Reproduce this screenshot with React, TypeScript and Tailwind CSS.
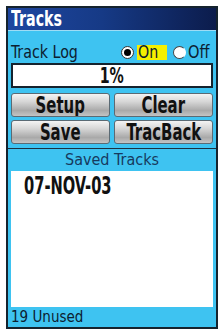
import React from "react";

const cond = { fontFamily: '"DejaVu Sans Condensed", "Liberation Sans Narrow", "DejaVu Sans", sans-serif' } as React.CSSProperties;

function Btn({ label }: { label: string }) {
  return (
    <div className="flex h-[24px] items-center justify-center overflow-hidden rounded-[3px] border border-[#5a6a74] bg-[linear-gradient(to_bottom,#f4f4f4_0%,#d6d6d6_35%,#a9a9a9_75%,#c4c4c4_100%)] text-[23px] font-bold leading-none text-[#111]" style={cond}>
      <span className="inline-block scale-x-[0.72]">{label}</span>
    </div>
  );
}

export default function App() {
  return (
    <div className="h-[329px] w-[221px] bg-white pl-[6px] pt-[6px]">
      <div className="flex h-[323px] w-[212px] flex-col border-2 border-[#15232e] bg-[#3ec3f1]">
        <div className="flex h-[22px] items-center bg-[linear-gradient(to_right,#1e46a0_0%,#163a86_45%,#0c1c4c_100%)] pl-[3px] text-[22px] font-bold leading-[22px] text-white" style={cond}>
          <span className="inline-block origin-left scale-x-[0.72]">Tracks</span>
        </div>
        <div className="h-[1px] bg-[#9fdcf5]" />
        <div className="flex flex-col px-[3px]">
          <div className="mt-[12px] flex h-[18px] items-center text-[17px] leading-none text-[#0c2030]" style={cond}>
            <span className="inline-block origin-left scale-x-[0.93]">Track Log</span>
            <div className="ml-auto flex items-center">
              <div className="flex h-[13px] w-[13px] items-center justify-center rounded-full border border-[#333] bg-white">
                <div className="h-[7px] w-[7px] rounded-full bg-black" />
              </div>
              <span className="ml-[3px] flex h-[15px] w-[30px] items-center bg-[#f5f000] pl-[1px]">
                <span className="inline-block origin-left scale-x-[0.93]">On</span>
              </span>
              <div className="ml-[6px] h-[13px] w-[13px] rounded-full border border-[#444] border-r-white bg-white" />
              <span className="ml-[2px] mr-[1px] inline-block w-[24px]">
                <span className="inline-block origin-left scale-x-[0.95]">Off</span>
              </span>
            </div>
          </div>
          <div className="mt-[2px] flex h-[25px] items-center justify-center border-2 border-[#15232e] bg-white text-[22px] font-bold leading-none text-[#111]" style={cond}>
            <span className="inline-block scale-x-[0.72]">1%</span>
          </div>
          <div className="mt-[5px] grid grid-cols-2 gap-x-[4px] gap-y-[3px]">
            <Btn label="Setup" />
            <Btn label="Clear" />
            <Btn label="Save" />
            <Btn label="TracBack" />
          </div>
        </div>
        <div className="mt-[4px] h-[1px] bg-[#1d3040]" />
        <div className="flex h-[22px] items-center justify-center text-[16px] leading-none text-[#163a5e]" style={cond}>
          Saved Tracks
        </div>
        <div className="mx-[3px] flex-1 bg-white pl-[13px] pt-[3px]">
          <div className="text-[24px] font-bold leading-none text-[#111]" style={cond}>
            <span className="inline-block origin-left scale-x-[0.68]">07-NOV-03</span>
          </div>
        </div>
        <div className="flex h-[20px] items-center pl-[3px] text-[15px] leading-none text-[#0c2030]" style={cond}>
          19 Unused
        </div>
      </div>
    </div>
  );
}
